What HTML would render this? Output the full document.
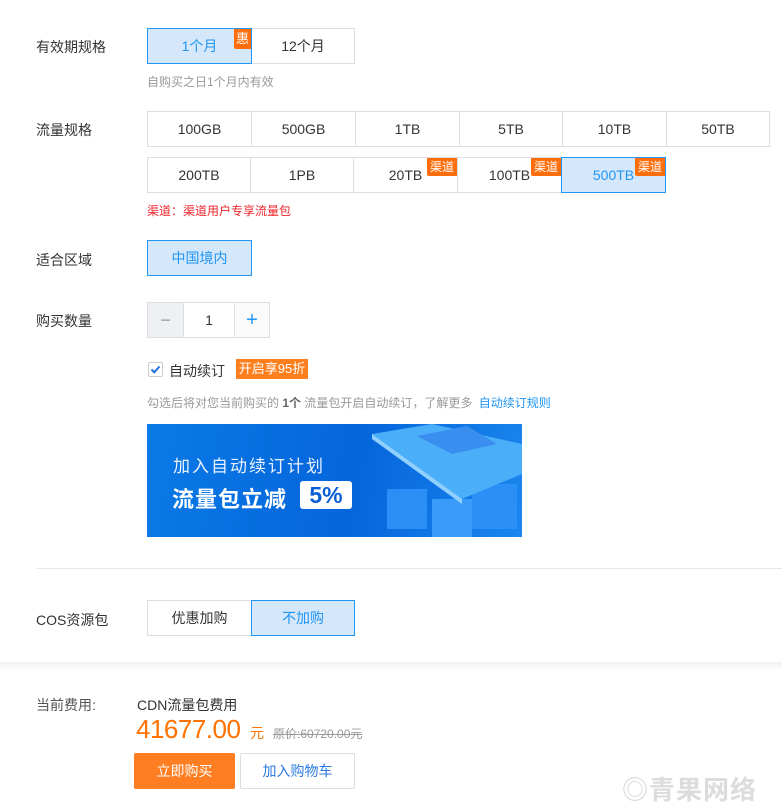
<!DOCTYPE html><html><head><meta charset="utf-8"><style>
*{box-sizing:border-box;margin:0;padding:0}
body{width:782px;height:800px;background:#fff;font-family:"Liberation Sans","Noto Sans CJK SC",sans-serif;font-size:14px;color:#333;position:relative;overflow:hidden}
.a{position:absolute}
.lbl{position:absolute;left:36px;font-size:14px;color:#333}
.b{position:absolute;height:36px;border:1px solid #dcdee3;background:#fff;text-align:center;line-height:34px;font-size:14px;color:#333}
.s{background:#d5e7fb;border-color:#2196f3;color:#2196f3;z-index:2}
.tag{position:absolute;top:0;right:0;background:#ff6e0c;color:#fff;font-size:12px;line-height:18px;padding:0 3px;height:18px;border-radius:0 0 0 2px}
.hint{position:absolute;font-size:12px;color:#999}
</style></head><body>
<div class="lbl" style="top:37px">有效期规格</div>
<div class="b s" style="left:147px;top:28px;width:105px">1个月<span class="tag" style="padding:0 2px;font-size:13px;height:20px;line-height:20px">惠</span></div>
<div class="b" style="left:251px;top:28px;width:104px">12个月</div>
<div class="hint" style="left:147px;top:73px">自购买之日1个月内有效</div>

<div class="lbl" style="top:120px">流量规格</div>
<div class="b" style="left:147px;top:111px;width:105px">100GB</div>
<div class="b" style="left:251px;top:111px;width:105px">500GB</div>
<div class="b" style="left:355px;top:111px;width:105px">1TB</div>
<div class="b" style="left:459px;top:111px;width:104px">5TB</div>
<div class="b" style="left:562px;top:111px;width:105px">10TB</div>
<div class="b" style="left:666px;top:111px;width:104px">50TB</div>
<div class="b" style="left:147px;top:157px;width:104px">200TB</div>
<div class="b" style="left:250px;top:157px;width:104px">1PB</div>
<div class="b" style="left:353px;top:157px;width:105px">20TB<span class="tag">渠道</span></div>
<div class="b" style="left:457px;top:157px;width:105px">100TB<span class="tag">渠道</span></div>
<div class="b s" style="left:561px;top:157px;width:105px">500TB<span class="tag">渠道</span></div>
<div class="a" style="left:147px;top:202px;font-size:12px;color:#f0252b">渠道：渠道用户专享流量包</div>

<div class="lbl" style="top:250px">适合区域</div>
<div class="b s" style="left:147px;top:240px;width:105px">中国境内</div>

<div class="lbl" style="top:311px">购买数量</div>
<div class="b" style="left:147px;top:302px;width:37px;background:#eef0f3;color:#999;font-size:18px">−</div>
<div class="b" style="left:183px;top:302px;width:52px">1</div>
<div class="b" style="left:234px;top:302px;width:36px;background:#fafafa;color:#2196f3;font-size:20px">+</div>

<div class="a" style="left:148px;top:362px;width:15px;height:15px;border:1px solid #ccc;border-radius:2px;background:#fff">
<svg width="13" height="13" viewBox="0 0 13 13" style="position:absolute;left:0;top:0"><path d="M2.5 6.5 L5.3 9.3 L10.5 3.5" stroke="#1e6fd9" stroke-width="2" fill="none"/></svg></div>
<div class="a" style="left:169px;top:361px">自动续订</div>
<div class="a" style="left:236px;top:359px;width:72px;height:20px;background:#ff7f1e;color:#fff;font-size:13px;line-height:20px;text-align:center">开启享95折</div>
<div class="hint" style="left:147px;top:394px">勾选后将对您当前购买的 <b style="color:#666">1个</b> 流量包开启自动续订，了解更多 <span style="color:#2196f3;margin-left:3px">自动续订规则</span></div>

<div class="a" style="left:147px;top:424px;width:375px;height:113px;background:linear-gradient(100deg,#0a7ae6 0%,#0565dc 55%,#1a86ee 100%);overflow:hidden">
<div class="a" style="left:26px;top:28px;color:#e8f1ff;font-size:17px;letter-spacing:2px">加入自动续订计划</div>
<div class="a" style="left:25px;top:58px;color:#fff;font-size:22px;font-weight:bold;letter-spacing:1px">流量包立减</div>
<div class="a" style="left:153px;top:57px;width:52px;height:28px;background:#fff;border-radius:3px;color:#0a5fd6;font-size:23px;font-weight:bold;text-align:center;line-height:28px">5%</div>
<svg class="a" style="left:210px;top:0" width="165" height="113" viewBox="0 0 165 113">
<rect x="30" y="65" width="40" height="40" fill="#2a8ef5"/><rect x="75" y="75" width="40" height="38" fill="#3a9cf8"/><rect x="115" y="60" width="45" height="45" fill="#2b90f5"/>
<polygon points="15,10 75,0 165,20 165,50 105,75" fill="#4aaef8"/>
<polygon points="15,10 105,75 105,80 15,15" fill="#8fd0ff"/>
<polygon points="60,12 110,2 140,20 95,30" fill="#3a8ef0"/>
</svg></div>

<div class="a" style="left:36px;top:568px;width:746px;height:1px;background:#e8e8e8"></div>
<div class="lbl" style="top:610px">COS资源包</div>
<div class="b" style="left:147px;top:600px;width:105px">优惠加购</div>
<div class="b s" style="left:251px;top:600px;width:104px">不加购</div>

<div class="a" style="left:0;top:662px;width:782px;height:8px;background:linear-gradient(#f0f1f4,#fff)"></div>
<div class="a" style="left:36px;top:695px;color:#555">当前费用:</div>
<div class="a" style="left:137px;top:695px;color:#333">CDN流量包费用</div>
<div class="a" style="left:136px;top:714px;color:#ff7200;font-size:26px;letter-spacing:-0.5px">41677.00</div>
<div class="a" style="left:250px;top:723px;color:#ff7200;font-size:14px">元</div>
<div class="a" style="left:273px;top:725px;color:#999;font-size:12px;text-decoration:line-through">原价:60720.00元</div>
<div class="a" style="left:134px;top:753px;width:101px;height:36px;background:#ff7e22;border-radius:2px;color:#fff;text-align:center;line-height:36px">立即购买</div>
<div class="a" style="left:240px;top:753px;width:115px;height:36px;border:1px solid #dcdee3;border-radius:2px;color:#2a7ae2;text-align:center;line-height:34px">加入购物车</div>
<div class="a" style="left:622px;top:770px;color:#dcdcdc;font-size:26px;font-weight:bold;letter-spacing:1px">◎青果网络</div>
</body></html>
